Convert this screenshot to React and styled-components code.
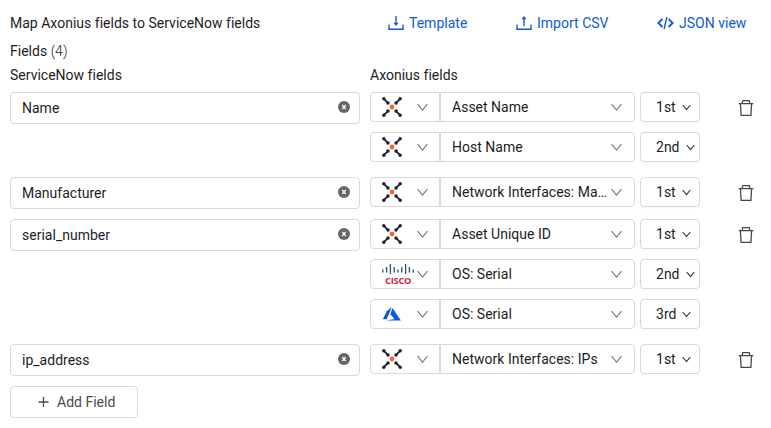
import React from "react";
import styled, { createGlobalStyle } from "styled-components";

const GlobalStyle = createGlobalStyle`
  * { box-sizing: border-box; }
  body {
    margin: 0;
    background: #fff;
    color: #1d1d1f;
    font: 400 14px/20px Roboto, sans-serif;
    letter-spacing: 0.01px;
  }
  svg { display: block; flex: none; }
`;

const Page = styled.main`
  width: 771px;
  height: 428px;
  padding: 13px 10px 0;
  overflow: hidden;
`;

const Header = styled.header`
  display: flex;
  height: 20px;
`;

const Title = styled.h1`
  width: 378px;
  margin: 0;
  font: inherit;
`;

const ActionLink = styled.button`
  display: flex;
  align-items: center;
  gap: ${(p) => p.$gap || 5}px;
  width: ${(p) => p.$width}px;
  padding: 0;
  border: 0;
  background: none;
  color: #1059d6;
  font: inherit;
  letter-spacing: inherit;
  white-space: nowrap;
`;

const FieldCount = styled.div`
  margin-top: 8px;
  span { font-weight: 300; }
`;

const ColumnHeads = styled.div`
  display: grid;
  grid-template-columns: 350px 1fr;
  column-gap: 10px;
  margin: 4px 0 7px;
`;

const Group = styled.section`
  display: grid;
  grid-template-columns: 350px 330px 36px;
  column-gap: 10px;
  align-items: start;
  margin-bottom: ${(p) => (p.$multi ? 15 : 10)}px;
`;

const NameInput = styled.div`
  display: flex;
  align-items: center;
  justify-content: space-between;
  height: 32px;
  padding: 0 9px 0 11px;
  border: 1px solid #d9d9d9;
  border-radius: 4px;
`;

const ClearButton = styled.button`
  padding: 0;
  margin-bottom: 2px;
  border: 0;
  background: none;
`;

const Sources = styled.div`
  display: flex;
  flex-direction: column;
  gap: 10px;
`;

const SourceRow = styled.div`
  display: flex;
  height: 30px;
`;

const AdapterSelect = styled.div`
  display: flex;
  align-items: center;
  width: 70px;
  padding-left: 11px;
  border: 1px solid #d9d9d9;
  border-radius: 4px 0 0 4px;
`;

const LogoBox = styled.div`
  width: 34.5px;
`;

const FieldSelect = styled.div`
  display: flex;
  align-items: center;
  justify-content: space-between;
  width: 195px;
  padding: 0 12px 0 11px;
  border: 1px solid #d9d9d9;
  border-radius: 0 4px 4px 0;
  white-space: nowrap;
`;

const RankSelect = styled.button`
  display: flex;
  align-items: center;
  gap: 6px;
  width: 60px;
  margin-left: 5px;
  padding: 0 0 1px 15px;
  border: 1px solid #d9d9d9;
  border-radius: 4px;
  background: #fff;
  box-shadow: 0 2px 0 rgba(0, 0, 0, 0.015);
  color: inherit;
  font: inherit;
  letter-spacing: inherit;
`;

const DeleteButton = styled.button`
  margin: 7px 0 0 28px;
  padding: 0;
  border: 0;
  background: none;
`;

const AddButton = styled.button`
  display: flex;
  align-items: center;
  gap: 8px;
  width: 128px;
  height: 32px;
  padding: 0 0 0 27px;
  border: 1px solid #d9d9d9;
  border-radius: 4px;
  background: #fff;
  color: #4a4a4a;
  font: inherit;
  letter-spacing: inherit;
`;

const TransferIcon = ({ up }) => (
  <svg width="16" height="16" viewBox="0 0 16 16" fill="none" stroke="#1059d6" strokeWidth="1.4">
    <path d="M1 9.5v4.8h14V9.5" />
    {up ? <path d="M8 11V3" /> : <path d="M8 1v8" />}
    <path d={up ? "M5.5 4.3 8 1l2.5 3.3z" : "M5.5 7.7 8 11l2.5-3.3z"} fill="#1059d6" stroke="none" />
  </svg>
);

const CodeIcon = () => (
  <svg width="17" height="14" viewBox="0 0 17 14" fill="none" stroke="#1059d6" strokeWidth="1.9">
    <path d="M5.4 3 1.4 7l4 4M11.6 3l4 4-4 4" />
    <path d="M9.9 1 7.1 13" strokeWidth="1.4" />
  </svg>
);

const ClearIcon = () => (
  <svg width="12" height="12" viewBox="0 0 12 12">
    <circle cx="6" cy="6" r="6" fill="#666" />
    <path d="m4.3 4 3.4 4M7.7 4 4.3 8" stroke="#fff" strokeWidth="1.2" />
  </svg>
);

const ChevronIcon = ({ small }) => (
  <svg
    width={small ? 9 : 11}
    height={small ? 8 : 9}
    viewBox={small ? "0 0 9 8" : "0 0 11 9"}
    fill="none"
    stroke={small ? "#333" : "#777"}
    strokeWidth={small ? 1.1 : 1.1}
  >
    <path d={small ? "m.7 2 3.8 4.7L8.3 2" : "m.6 1.2 4.9 6 4.9-6"} />
  </svg>
);

const TrashIcon = () => (
  <svg width="16" height="18" viewBox="0 0 16 18" fill="none" stroke="#484848" strokeWidth="1.3">
    <path d="M.7 4.6h14.6M4.2 4.2l.6-2.5h6.4l.6 2.5M2.4 4.8l.7 11.5h9.8l.7-11.5" />
  </svg>
);

const PlusIcon = () => (
  <svg width="11" height="12" viewBox="0 0 11 12" stroke="#4a4a4a" strokeWidth="1.3">
    <path d="M5.5 1v10M.5 6h10" />
  </svg>
);

const AxoniusLogo = () => (
  <svg width="20" height="20" viewBox="0 0 20 20" fill="#1c2030">
    <path
      d="m1.8 1.8 4.4 4.4M18.2 1.8l-4.4 4.4M1.8 18.2l4.4-4.4M18.2 18.2l-4.4-4.4"
      stroke="#1c2030"
      strokeWidth="1.8"
    />
    {[[1.8, 1.8], [18.2, 1.8], [1.8, 18.2], [18.2, 18.2], [6, 6], [14, 6], [6, 14], [14, 14]].map(([x, y]) => (
      <circle key={`${x}-${y}`} cx={x} cy={y} r="1.7" />
    ))}
    <circle cx="10" cy="10" r="2.4" fill="#ff6230" />
  </svg>
);

const CISCO_BARS = [
  [0.8, 7, 9], [4.6, 4.6, 9], [8.4, 1.4, 10.6], [12.2, 4.6, 9], [16, 7, 9],
  [19.8, 4.6, 9], [23.6, 1.4, 10.6], [27.4, 4.6, 9], [31.2, 7, 9],
];

const CiscoLogo = () => (
  <svg width="33" height="22" viewBox="0 0 33 22">
    {CISCO_BARS.map(([x, top, bottom]) => (
      <path key={x} d={`M${x} ${top}V${bottom}`} stroke="#225365" strokeWidth="1.3" strokeLinecap="round" />
    ))}
    <text
      x="3"
      y="20.7"
      textLength="26.5"
      fill="#d01f3c"
      fontFamily="Open Sans, sans-serif"
      fontSize="9.3"
      fontWeight="700"
      letterSpacing="0"
    >
      CISCO
    </text>
    <circle cx="31.2" cy="20.2" r=".4" fill="#d01f3c" />
  </svg>
);

const AzureLogo = () => (
  <svg width="20" height="16" viewBox="0 0 20 16" fill="#0b5bd8">
    <path d="M9.8 1 4.8 5.3.8 13.2h4z" />
    <path d="M10.5 2 8.3 8.2l4.2 4.9-8 1.5h14.4z" />
  </svg>
);

const LOGOS = { axonius: AxoniusLogo, cisco: CiscoLogo, azure: AzureLogo };

const MAPPINGS = [
  { name: "Name", sources: [["axonius", "Asset Name", "1st"], ["axonius", "Host Name", "2nd"]] },
  { name: "Manufacturer", sources: [["axonius", "Network Interfaces: Ma…", "1st"]] },
  {
    name: "serial_number",
    sources: [["axonius", "Asset Unique ID", "1st"], ["cisco", "OS: Serial", "2nd"], ["azure", "OS: Serial", "3rd"]],
  },
  { name: "ip_address", sources: [["axonius", "Network Interfaces: IPs", "1st"]] },
];

function Source({ adapter, field, rank }) {
  const Logo = LOGOS[adapter];
  return (
    <SourceRow>
      <AdapterSelect>
        <LogoBox><Logo /></LogoBox>
        <ChevronIcon />
      </AdapterSelect>
      <FieldSelect>
        <span>{field}</span>
        <ChevronIcon />
      </FieldSelect>
      <RankSelect>
        {rank}
        <ChevronIcon small />
      </RankSelect>
    </SourceRow>
  );
}

export default function App() {
  return (
    <Page>
      <GlobalStyle />
      <Header>
        <Title>Map Axonius fields to ServiceNow fields</Title>
        <ActionLink $width={128}><TransferIcon />Template</ActionLink>
        <ActionLink $width={141}><TransferIcon up />Import CSV</ActionLink>
        <ActionLink $width={90} $gap={5}><CodeIcon />JSON view</ActionLink>
      </Header>
      <FieldCount>Fields <span>(4)</span></FieldCount>
      <ColumnHeads>
        <div>ServiceNow fields</div>
        <div>Axonius fields</div>
      </ColumnHeads>
      {MAPPINGS.map(({ name, sources }) => (
        <Group key={name} $multi={sources.length > 1}>
          <NameInput>
            {name}
            <ClearButton aria-label="Clear"><ClearIcon /></ClearButton>
          </NameInput>
          <Sources>
            {sources.map(([adapter, field, rank]) => (
              <Source key={rank} adapter={adapter} field={field} rank={rank} />
            ))}
          </Sources>
          <DeleteButton aria-label="Delete"><TrashIcon /></DeleteButton>
        </Group>
      ))}
      <AddButton><PlusIcon />Add Field</AddButton>
    </Page>
  );
}
